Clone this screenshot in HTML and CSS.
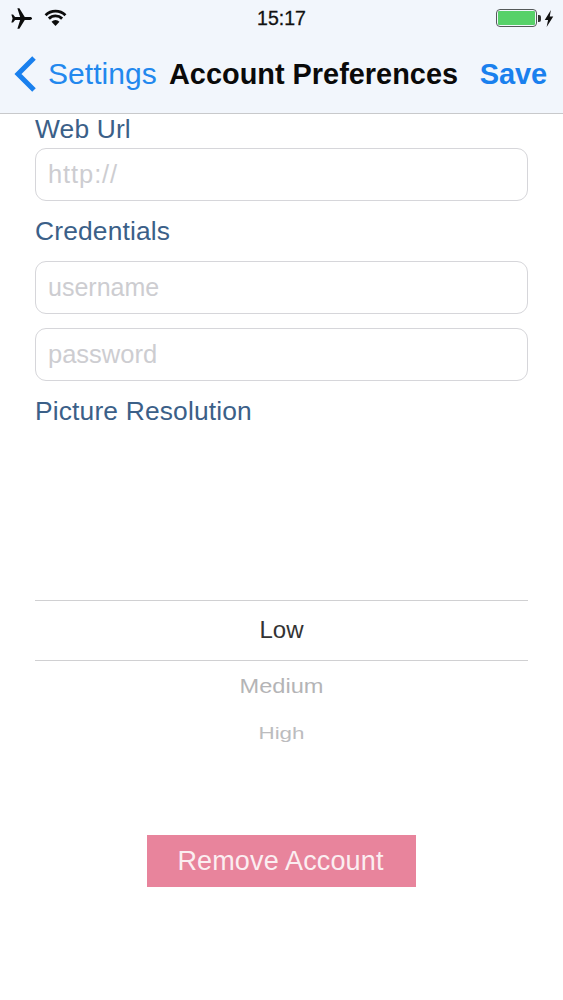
FILE: index.html
```html
<!DOCTYPE html>
<html lang="en">
<head>
<meta charset="utf-8">
<title>Account Preferences</title>
<link rel="stylesheet" href="styles.css">
</head>
<body>
<div class="screen">
  <header class="header">
    <div class="status">
      <div class="status-left">
        <svg class="icon-plane" viewBox="0 0 24 24"><path d="M23 12c0-.9-1-1.500-2-1.500h-5.600L9.800 1.300H7.700l2.900 9.200H5.300L3.200 7.900H1.400l1.300 4.100-1.300 4.100h1.800l2.100-2.600h5.300l-2.900 9.200h2.100l5.600-9.200H21c1 0 2-.6 2-1.500z"/></svg>
        <svg class="icon-wifi" viewBox="0 0 24 18"><path class="arc" d="M1.500 6.500a15 15 0 0 1 21 0"/><path class="arc" d="M5 10.200a10 10 0 0 1 14 0"/><path d="M12 18l-4.200-4.600a6 6 0 0 1 8.400 0z"/></svg>
      </div>
      <div class="time">15:17</div>
      <div class="status-right">
        <div class="battery"><div class="battery-fill"></div></div>
        <div class="battery-tip"></div>
        <svg class="icon-bolt" viewBox="0 0 10 18"><path d="M7 0L.5 10.500h3.500l-1.500 7.500L9.500 7H5.800z"/></svg>
      </div>
    </div>
    <nav class="nav">
      <a class="back">
        <svg class="chevron" viewBox="0 0 24 38"><path d="M21 3L5 19l16 16"/></svg>
        <span>Settings</span>
      </a>
      <h1 class="title">Account Preferences</h1>
      <a class="save">Save</a>
    </nav>
  </header>
  <main class="form">
    <label class="label">Web Url</label>
    <div class="input input-url">http://</div>
    <label class="label label-cred">Credentials</label>
    <div class="input input-user">username</div>
    <div class="input input-next">password</div>
    <label class="label label-pic">Picture Resolution</label>
    <div class="picker">
      <div class="picked">Low</div>
      <div class="opt opt-medium">Medium</div>
      <div class="opt opt-high">High</div>
    </div>
    <div class="actions"><button class="remove">Remove Account</button></div>
  </main>
</div>
</body>
</html>
```
FILE: styles.css
```css
* { box-sizing: border-box; }
html, body { margin: 0; padding: 0; background: #fff; }
body { font-family: "Liberation Sans", Arial, sans-serif; }
.screen { width: 563px; height: 1000px; overflow: hidden; background: #fff; }
.header { height: 114px; background: #f2f6fc; border-bottom: 1px solid #c8c9cb; }
.status { height: 36px; display: flex; align-items: center; justify-content: space-between; padding: 0 9px 0 10px; }
.status-left { display: flex; align-items: center; gap: 10px; width: 200px; }
.icon-plane { width: 23px; height: 23px; fill: #0c0c0c; }
.icon-wifi { width: 23px; height: 17px; fill: #0c0c0c; margin-top: -2px; margin-left: 1px; }
.icon-wifi .arc { fill: none; stroke: #0c0c0c; stroke-width: 3; }
.time { font-size: 19.500px; color: #111; -webkit-text-stroke: 0.3px #111; margin-left: -1px; }
.status-right { display: flex; align-items: center; justify-content: flex-end; width: 200px; }
.battery { width: 41px; height: 18px; border: 1.500px solid #55595a; border-radius: 4px; padding: 1px; }
.battery-fill { width: 100%; height: 100%; background: #57d169; border-radius: 1px; }
.battery-tip { width: 3px; height: 7px; background: #333; border-radius: 0 2px 2px 0; margin-left: 1px; }
.icon-bolt { width: 10px; height: 17px; fill: #111; margin-left: 3px; }
.nav { height: 76px; display: flex; align-items: center; padding: 0 16px 0 13px; }
.back { display: flex; align-items: center; color: #2288ee; font-size: 30px; letter-spacing: 0.05px; width: 156px; }
.chevron { width: 24px; height: 38px; fill: none; stroke: #1a80ee; stroke-width: 5; margin-right: 11px; flex: none; }
.title { margin: 0; font-size: 28.900px; font-weight: 700; color: #0a0a0a; white-space: nowrap; line-height: 34px; }
.save { margin-left: auto; font-size: 29px; font-weight: 700; color: #1a80ee; letter-spacing: -0.1px; }
.form { padding: 0 35px; }
.label { display: block; font-size: 26.400px; letter-spacing: 0.15px; line-height: 30px; color: #3b6088; }
.input { height: 53px; margin-top: 4px; border: 1px solid #d6d6da; border-radius: 11px; background: #fff; padding: 0 12px; font-size: 25.500px; line-height: 51px; color: #cdcdd1; }
.input-url { letter-spacing: 0.9px; }
.input-user { margin-top: 15px; font-size: 25px; }
.label-cred { margin-top: 15px; }
.input-next { margin-top: 14px; }
.label-pic { margin-top: 15px; }
.picker { margin-top: 174px; }
.picked { height: 61px; border-top: 1px solid #d0d0d2; border-bottom: 1px solid #d0d0d2; text-align: center; font-size: 24px; line-height: 58px; color: #333; }
.opt { text-align: center; color: #b4b4b6; }
.opt-medium { margin-top: 12px; font-size: 23.600px; line-height: 26px; transform: scaleY(0.82); }
.opt-high { margin-top: 24px; font-size: 22.400px; line-height: 22px; color: #bcbcbe; transform: scaleY(0.7); }
.actions { display: flex; justify-content: center; margin-top: 90px; }
.remove { width: 269px; height: 52px; border: 0; border-radius: 0; background: #e8849c; color: #fbeef1; font-family: inherit; font-size: 27px; letter-spacing: 0.15px; padding: 0 2px 0 0; }
```
